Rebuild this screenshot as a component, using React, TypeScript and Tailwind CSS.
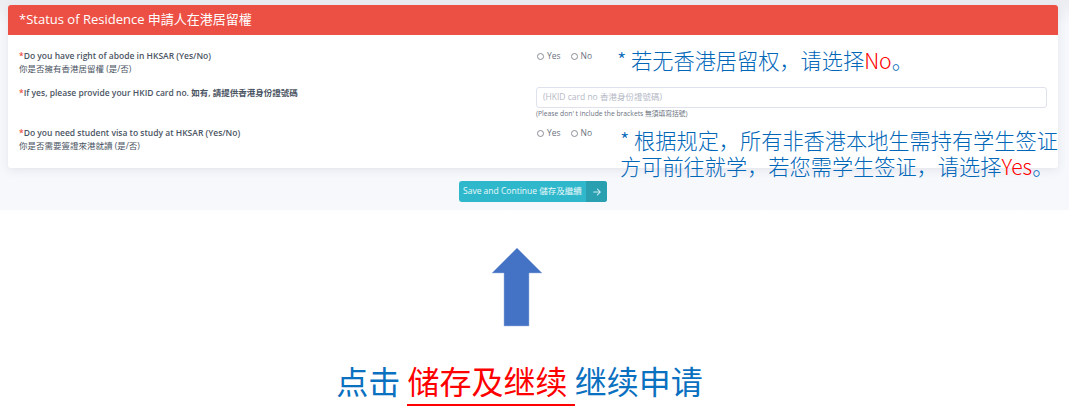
const cjk = '"Noto Sans CJK SC", sans-serif';

function Radio({ label }: { label: string }) {
  return (
    <span className="flex items-center gap-[3px]">
      <span className="w-[7px] h-[7px] rounded-full border border-[#8a8f98] bg-white" />
      <span>{label}</span>
    </span>
  );
}

function YesNo() {
  return (
    <div className="flex gap-[10px] pl-[1px] pt-[1px] text-[8.5px] leading-[12px] text-[#6b7280]">
      <Radio label="Yes" />
      <Radio label="No" />
    </div>
  );
}

function Question({ en, zh }: { en: string; zh?: string }) {
  return (
    <div className="text-[8.5px] leading-[13px] font-semibold text-[#4b5563]">
      <div>
        <span className="text-[#ec5044]">*</span>
        {en}
      </div>
      {zh && <div className="font-normal">{zh}</div>}
    </div>
  );
}

export default function App() {
  return (
    <div className="w-[1080px] h-[420px] overflow-hidden bg-white font-['Open_Sans','Noto_Sans_CJK_TC',sans-serif]">
      <div className="w-[1069px] h-[210px] bg-gradient-to-b from-[#ebedf1] to-[#f7f8fc] to-[12%] pt-[5px] pl-[8px] relative">
        <div className="w-[1050px] h-[163px] bg-white rounded-[3px] shadow-[0_2px_10px_rgba(50,60,90,0.1)] overflow-hidden">
          <div className="h-[30px] bg-[#ec5044] pl-[11px] flex items-center text-white text-[13px]">
            *Status of Residence 申請人在港居留權
          </div>
          <div className="grid grid-cols-[517px_511px] pl-[11px] pt-[14px]">
            <div className="h-[37px]">
              <Question en="Do you have right of abode in HKSAR (Yes/No)" zh="你是否擁有香港居留權 (是/否)" />
            </div>
            <div className="h-[37px]">
              <YesNo />
            </div>
            <div className="h-[40px]">
              <Question en="If yes, please provide your HKID card no. 如有, 請提供香港身份證號碼" />
            </div>
            <div className="h-[40px]">
              <div className="h-[21px] mt-[1px] rounded-[3px] border border-[#dfe2ec] px-[6px] flex items-center text-[8.5px] text-[#b6b9c6]">
                (HKID card no 香港身份證號碼)
              </div>
              <div className="text-[6.75px] leading-[10px] mt-[1px] text-[#6b7280]">
                (Please don' t include the brackets 無須填寫括號)
              </div>
            </div>
            <div>
              <Question en="Do you need student visa to study at HKSAR (Yes/No)" zh="你是否需要簽證來港就讀 (是/否)" />
            </div>
            <div>
              <YesNo />
            </div>
          </div>
        </div>

        <div className="w-[148px] h-[21px] mt-[13px] ml-[451px] rounded-[3px] bg-[#2fb8cb] text-white/90 text-[8.5px] flex items-center overflow-hidden">
          <span className="flex-1 pl-[4px] whitespace-nowrap">Save and Continue 儲存及繼續</span>
          <span className="w-[21px] h-full bg-[#2a9fb0] flex items-center justify-center">
            <svg width="10" height="10" viewBox="0 0 24 24" fill="none" stroke="#cfeff3" strokeWidth="2.5" strokeLinecap="round" strokeLinejoin="round">
              <path d="M4 12h16M13 5l7 7-7 7" />
            </svg>
          </span>
        </div>

        <div
          className="absolute left-[617px] top-[46px] text-[21.2px] leading-[28px] font-light text-[#0066b8] whitespace-nowrap"
          style={{ fontFamily: cjk }}
        >
          * 若无香港居留权，请选择<span className="text-[#ff0000]">No</span>。
        </div>
        <div
          className="absolute left-[620px] top-[127px] text-[21.2px] leading-[26px] font-light text-[#0066b8] whitespace-nowrap"
          style={{ fontFamily: cjk }}
        >
          <div>* 根据规定，所有非香港本地生需持有学生签证</div>
          <div>
            方可前往就学，若您需学生签证，请选择<span className="text-[#ff0000]">Yes</span>。
          </div>
        </div>
      </div>

      <div className="w-[1039px] flex flex-col items-center">
        <svg className="mt-[37px] ml-[-6px]" width="52" height="80" viewBox="0 0 52 80">
          <path d="M26 1 L51 26 H38 V79 H13 V26 H1 Z" fill="#4472c4" stroke="#9db4de" strokeWidth="0.5" />
        </svg>
        <div
          className="mt-[31px] text-[32px] leading-[44px] text-[#0a70c0] whitespace-nowrap"
          style={{ fontFamily: cjk }}
        >
          点击 <span className="text-[#ff0000] border-b-2 border-[#ff0000] pb-[1px]">储存及继续 </span>继续申请
        </div>
      </div>
    </div>
  );
}
